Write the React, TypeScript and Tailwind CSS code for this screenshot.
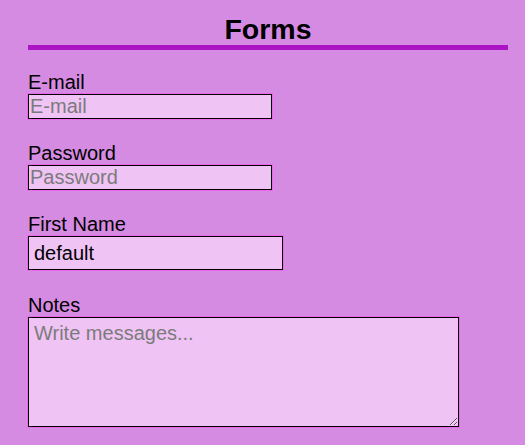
import React, { useState } from "react";

const field =
	"block border border-black bg-[#f0c3f5] shadow-[0_0_0_1px_#ee66ee] text-[20px] leading-[23px] text-black outline-none placeholder:text-[#7b7b7b]";

const App: React.FC = () => {
	const [firstName, setFirstName] = useState("default");
	return (
		<div className="min-h-[445px] w-full bg-[#d68be3] font-['Liberation_Sans',Arial,sans-serif] text-black">
			<div className="pt-[13px] pl-[28px] pr-[17px]">
				{/* HEADING */}
				<h1 className="text-center text-[28.5px] font-bold leading-[32px] border-b-[5px] border-[#aa14c4]">
					Forms
				</h1>

				<form className="mt-[21px] flex flex-col gap-[23px]">
					{/* E-MAIL */}
					<div>
						<label htmlFor="email" className="block text-[20px] leading-[23px]">
							E-mail
						</label>
						<input
							id="email"
							type="email"
							placeholder="E-mail"
							className={`${field} w-[244px] h-[25px] px-[1px] py-0`}
						/>
					</div>

					{/* PASSWORD */}
					<div>
						<label htmlFor="password" className="block text-[20px] leading-[23px]">
							Password
						</label>
						<input
							id="password"
							type="password"
							placeholder="Password"
							className={`${field} w-[244px] h-[25px] px-[1px] py-0`}
						/>
					</div>

					{/* FIRST NAME */}
					<div>
						<label htmlFor="firstName" className="block text-[20px] leading-[23px]">
							First Name
						</label>
						<input
							id="firstName"
							type="text"
							value={firstName}
							onChange={(e) => setFirstName(e.target.value)}
							className={`${field} w-[255px] h-[34px] px-[5px]`}
						/>
					</div>

					{/* NOTES */}
					<div>
						<label htmlFor="notes" className="block text-[20px] leading-[24px]">
							Notes
						</label>
						<textarea
							id="notes"
							placeholder="Write messages..."
							className={`${field} w-[431px] h-[110px] px-[5px] py-[4px]`}
						/>
					</div>
				</form>
			</div>
		</div>
	);
};

export default App;
